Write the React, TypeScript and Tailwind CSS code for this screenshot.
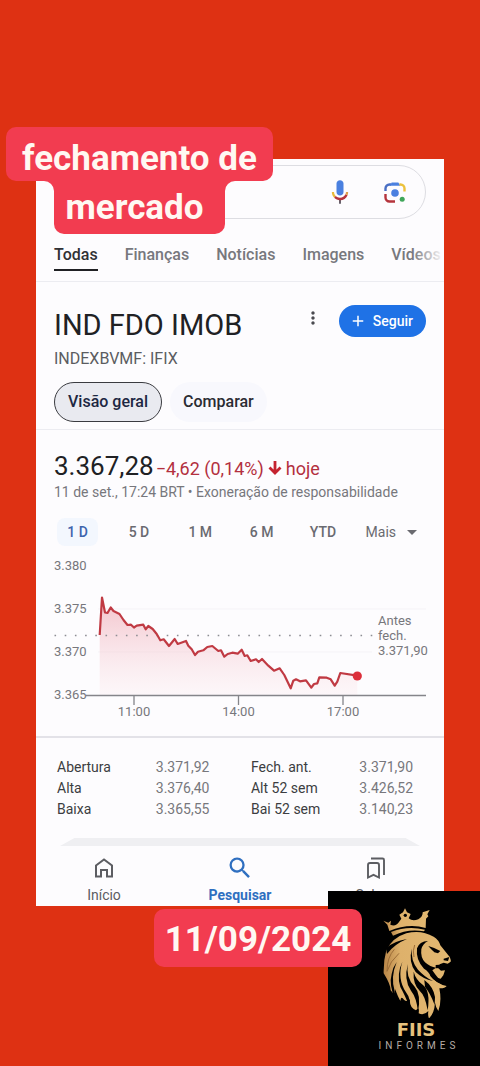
import { MdAdd, MdArrowDropDown, MdMoreVert, MdSearch } from "react-icons/md";

const LINE =
  "99.7,635 102,597.5 105,612.5 107.5,613 110.7,607.5 113.5,611 119.5,614 123.5,620 127.5,625 131,624.7 134,627.5 136.7,625.7 143.3,624.7 145.7,629.3 148.3,626 152.7,629 156.7,634 160.3,640.3 163.7,639.3 169,646 174.7,639 177.7,644 186,641 188.3,645.7 191.7,649.3 195,655 198,651.7 203.3,650.3 207.3,647 212.3,646 218.3,651 221,650.3 224.3,656.7 227.7,654 232.3,652.7 237.7,653.7 241.7,649.7 244.7,656 247.3,655.3 250.7,661 256,659.3 258.7,662 262,659 268.3,665.7 274,670.7 279.7,668.3 284.3,675 290.7,688.3 293.3,680.7 296,679.3 300,681.3 306,680.3 311.3,687.7 314,684 317.3,683.3 319.3,677.3 326.7,677.7 330.7,679.3 334.7,685.7 337.3,681.7 340.3,673 357.3,675.7";

const TABS = ["Todas", "Finanças", "Notícias", "Imagens", "Vídeos"];
const PERIODS = ["1 D", "5 D", "1 M", "6 M", "YTD"];
const STATS = [
  ["Abertura", "3.371,92", "Fech. ant.", "3.371,90"],
  ["Alta", "3.376,40", "Alt 52 sem", "3.426,52"],
  ["Baixa", "3.365,55", "Bai 52 sem", "3.140,23"],
];

function MicIcon() {
  return (
    <svg viewBox="0 0 24 24" className="size-7" aria-hidden="true">
      <path fill="#4a80e0" d="M12 15c1.7 0 3-1.3 3-3V4.900c0-1.700-1.300-3-3-3s-3 1.300-3 3V12c0 1.700 1.300 3 3 3z" />
      <path fill="#5d5560" d="M11.200 18h1.600v4h-1.600z" />
      <path fill="#e9b93a" d="M7 16.900C5.800 15.600 5 14 5 12h1.900c0 1.500.600 2.500 1.500 3.400z" />
      <path fill="#b5343c" d="M12 16.900c-1.400 0-2.700-.6-3.600-1.500L7 16.900c1.300 1.300 3 2.100 5 2.100 3 0 5.500-1.700 6.500-4.300l-1.900-.700c-.8 1.800-2.500 2.900-4.600 2.900z" />
      <path fill="#e0a04a" d="M18.500 14.700c.300-.8.500-1.700.5-2.700h-1.900c0 .7-.2 1.400-.5 2z" />
    </svg>
  );
}

function LensIcon() {
  return (
    <svg viewBox="0 0 24 24" className="size-6" fill="none" strokeWidth="2.400" aria-hidden="true">
      <path d="M2.500 11V8.500a4 4 0 0 1 4-4H8" stroke="#4a6fc4" />
      <path d="M6.500 5.700L8.700 2.400h6.600l2.200 3.300z" fill="#4a80e0" />
      <path d="M16.500 4.500h1a4 4 0 0 1 4 4v3" stroke="#ecc23c" />
      <path d="M2.500 14v3.500a4 4 0 0 0 4 4H12" stroke="#b5343c" />
      <circle cx="12" cy="13" r="3.800" fill="#4a80e0" />
      <circle cx="19.200" cy="19.200" r="2.500" fill="#3fa65a" />
    </svg>
  );
}

function PriceChart() {
  return (
    <svg
      viewBox="36 550 408 186"
      className="block w-full font-['Roboto',sans-serif] text-[13px]"
      fill="#77777c"
      role="img"
      aria-label="Gráfico de 1 dia"
    >
      <defs>
        <linearGradient id="area" x1="0" y1="597" x2="0" y2="695" gradientUnits="userSpaceOnUse">
          <stop offset="0" stopColor="#ec9aa6" stopOpacity=".6" />
          <stop offset="1" stopColor="#fbe6ea" stopOpacity=".25" />
        </linearGradient>
      </defs>
      <path d="M98 609H426M98 652H372" stroke="#f5f3f7" />
      <polygon points={"99.7,695 " + LINE + " 357.3,695"} fill="url(#area)" />
      <path d="M54.500 635.500H376" stroke="#8d8d93" strokeWidth="1.600" strokeDasharray="1.600 8.600" />
      <path d="M86 695.500H426M134 695.500V705M238.500 695.500V705M343 695.500V705" stroke="#85858a" strokeWidth="1.300" />
      <polyline points={LINE} fill="none" stroke="#c03a43" strokeWidth="2.200" strokeLinejoin="round" />
      <circle cx="357.300" cy="676" r="4.600" fill="#dc2f3a" />
      <text x="54" y="570">3.380</text>
      <text x="54" y="613">3.375</text>
      <text x="54" y="656">3.370</text>
      <text x="54" y="699">3.365</text>
      <g textAnchor="middle">
        <text x="134" y="716">11:00</text>
        <text x="238.500" y="716">14:00</text>
        <text x="343" y="716">17:00</text>
      </g>
      <text x="378" y="625">Antes</text>
      <text x="378" y="640">fech.</text>
      <text x="378" y="655">3.371,90</text>
    </svg>
  );
}

function HomeIcon() {
  return (
    <svg viewBox="0 0 24 24" className="size-6" fill="none" stroke="#5c5d62" strokeWidth="2" aria-hidden="true">
      <path d="M4 9.500L12 3.500l8 6v11h-5v-6.500h-6v6.500H4z" />
    </svg>
  );
}

function SavedIcon() {
  return (
    <svg viewBox="0 0 24 24" className="size-6" fill="none" stroke="#5c5d62" strokeWidth="1.900" aria-hidden="true">
      <path d="M4 21.500V9q0-2 2-2h7q2 0 2 2v12.500l-5.500-2.600z" />
      <path d="M7 2.500h11.500q1.500 0 1.500 1.500v15" />
    </svg>
  );
}

function LionLogo() {
  return (
    <svg viewBox="180 60 222 351" className="h-[117px] w-[74px]" aria-hidden="true">
      <defs>
        <linearGradient id="gold" x1="0" y1="0" x2="1" y2="0">
          <stop offset="0" stopColor="#b88648" />
          <stop offset=".25" stopColor="#deb16b" />
          <stop offset="1" stopColor="#e2b871" />
        </linearGradient>
      </defs>
      <g fill="url(#gold)">
        <path d="M193 107L208 113 216 107 214 119Q230 126 240 111L247 101 241 89 252 82 258 70 264 82 275 87 269 100Q280 110 298 103 312 95 311 82L332 75 325 88 328 94 321 101 320 129Q268 114 211 138L205 119Z" />
        <path d="M216 141Q265 121 318 134L315 139Q267 130 222 152Z" />
        <path d="M202 196Q220 158 262 145 306 133 344 155 360 165 364 181L388 211Q397 218 395 230L386 236 374 233 362 238 358 250 366 257 378 256 373 271 365 281 354 278 337 262 334 272Q352 296 383 303 377 311 361 310 369 349 358 378 350 366 348 353 346 385 330 400 326 392 328 378 315 393 299 385 302 362 291 376 270 366 273 343 263 352 255 344 246 330 244 348 236 333 228 312 229 336 215 316 215 299 194 265 193 228 202 196Z" />
      </g>
      <g fill="#000">
        <path d="M201 190Q222 169 264 162 226 177 204 207Z" />
        <path d="M294 190Q301 169 327 168 311 176 307 193 304 217 318 232 334 246 351 248L340 256Q348 268 358 280 373 294 382 301 350 294 335 274 330 260 315 251 290 226 294 190Z" />
        <path d="M279 191Q274 225 297 254 318 277 342 288 312 282 290 261 267 229 279 191Z" />
        <path d="M233 231Q214 277 227 318L229 346Q209 298 218 267 222 246 233 231Z" />
        <path d="M250 230Q234 281 261 322 276 342 270 362 256 327 244 306 232 268 250 230Z" />
        <path d="M267 237Q259 277 287 305 307 327 297 381 293 338 276 317 253 284 267 237Z" />
        <path d="M284 260Q290 284 312 300 335 318 326 376 318 331 303 319 281 297 284 260Z" />
        <path d="M316 285Q343 305 348 336L347 360Q333 323 318 306Z" />
        <path d="M328 183Q346 188 364 198L357 205 346 202Q337 194 328 183Z" />
        <path d="M374 221L391 216 387 228 374 226ZM350 240Q369 237 378 244L367 249 350 250Z" />
        <circle cx="259" cy="91" r="5" />
      </g>
      <path d="M226 193Q204 217 204 259 213 229 240 205M287 180Q280 197 285 216" fill="none" stroke="#9c6d38" strokeWidth="3" />
    </svg>
  );
}

export default function App() {
  return (
    <div className="relative min-h-screen overflow-hidden bg-[#de3113] px-9 pt-[159px] pb-40 font-['Roboto',sans-serif] text-[#202124]">
      <main className="bg-[#fdfcfe]">
        <div className="px-[18px] pt-1.5">
          <div className="flex h-[54px] items-center justify-end gap-[29px] rounded-full border border-[#dddde2] pr-[18px]">
            <button type="button" aria-label="Pesquisa por voz">
              <MicIcon />
            </button>
            <button type="button" aria-label="Pesquisa por imagem">
              <LensIcon />
            </button>
          </div>
        </div>

        <nav className="relative flex gap-[27px] overflow-hidden border-b border-[#ececf1] pt-[21px] pb-2.5 pl-[18px] text-base leading-7 font-medium text-[#77787d]">
          {TABS.map((tab, i) => (
            <a
              key={tab}
              href="#"
              className={i === 0 ? "border-b-2 border-[#202124] pt-px text-[#303135]" : "border-b-2 border-transparent pt-px"}
            >
              {tab}
            </a>
          ))}
          <span className="absolute inset-y-0 right-0 w-8 bg-linear-to-r from-transparent to-[#fdfcfe]" />
        </nav>

        <header className="border-b border-[#ececf1] px-[18px] pt-[23px] pb-[7px]">
          <div className="flex items-start">
            <h1 className="mt-1 flex-1 text-[29px] leading-8">IND FDO IMOB</h1>
            <button type="button" aria-label="Mais opções" className="mt-[3px] mr-4 text-[#4a4a4f]">
              <MdMoreVert className="size-5" />
            </button>
            <button
              type="button"
              className="flex h-8 items-center gap-1.5 rounded-full bg-[#1f72e6] pr-[13px] pl-2.5 text-sm font-medium text-white"
            >
              <MdAdd className="size-[18px]" />
              Seguir
            </button>
          </div>
          <p className="mt-2 text-base leading-5 text-[#5b5c61]">INDEXBVMF: IFIX</p>
          <div className="mt-[13px] flex gap-2 text-base font-medium text-[#2b2c33]">
            <button type="button" className="h-10 rounded-full border border-[#3a3b40] bg-[#e9eaf0] px-[13px] text-[#1d2742]">
              Visão geral
            </button>
            <button type="button" className="h-10 rounded-full bg-[#f8f8fd] px-[13px]">
              Comparar
            </button>
          </div>
        </header>

        <section className="border-b-2 border-[#e3e2e8] pt-5">
          <div className="flex h-8 items-baseline gap-0.5 px-[18px] leading-8">
            <span className="text-[26px]">3.367,28</span>
            <span className="flex items-baseline gap-1 text-lg leading-8 text-[#b3303f]">
              −4,62 (0,14%)
              <svg viewBox="0 0 14 14" className="size-3.5" fill="none" stroke="#c4222f" strokeWidth="2.800" aria-hidden="true">
                <path d="M7 0v12M1.500 6.500L7 12l5.500-5.500" />
              </svg>
              hoje
            </span>
          </div>
          <p className="px-[18px] text-sm leading-5 whitespace-nowrap text-[#77777c]">
            11 de set., 17:24 BRT • Exoneração de responsabilidade
          </p>
          <div className="mt-3.5 mb-0.5 flex h-8 items-center pr-5 pl-[11px] text-sm font-medium text-[#6a6a70]">
            {PERIODS.map((p, i) => (
              <button key={p} type="button" className="flex-1">
                <span className={i === 0 ? "rounded-lg bg-[#f3f7fe] px-2.5 py-1.5 text-[#3e64ad]" : ""}>{p}</span>
              </button>
            ))}
            <button type="button" className="flex items-center gap-1 pl-3 font-normal">
              Mais
              <MdArrowDropDown className="size-6" />
            </button>
          </div>
          <PriceChart />
        </section>

        <section className="px-[21px] pt-[18px] pb-[19px]">
          <table className="w-full table-fixed text-left text-sm">
            <tbody>
              {STATS.map(([a, b, c, d]) => (
                <tr key={a} className="h-[21px] leading-5 whitespace-nowrap">
                  <th scope="row" className="w-[27%] p-0 font-normal text-[#3c3d41]">{a}</th>
                  <td className="w-[26%] p-0 text-[#77777c]">{b}</td>
                  <th scope="row" className="w-[27%] p-0 font-normal text-[#3c3d41]">{c}</th>
                  <td className="p-0 text-right text-[#77777c]"><span className="mr-2.5">{d}</span></td>
                </tr>
              ))}
            </tbody>
          </table>
        </section>

        <div className="mx-6 h-2 bg-[#efeff2] [clip-path:polygon(4%_0,96%_0,100%_100%,0_100%)]" />

        <nav className="grid h-[60px] grid-cols-3 text-sm leading-5 text-[#5c5d62]">
          <a href="#" className="flex flex-col items-center pt-2.5">
            <HomeIcon />
            <span className="mt-[5px]">Início</span>
          </a>
          <a href="#" className="flex flex-col items-center pt-2 font-bold text-[#2f6fc0]">
            <MdSearch className="size-7" />
            <span className="mt-[3px]">Pesquisar</span>
          </a>
          <a href="#" className="flex flex-col items-center pt-2.5">
            <SavedIcon />
            <span className="mt-[5px]">Salvos</span>
          </a>
        </nav>
      </main>

      <aside className="absolute right-0 bottom-0 flex h-[175px] w-[152px] flex-col items-center bg-black pt-3.5 pl-6">
        <LionLogo />
        <p className="font-['DejaVu_Sans',sans-serif] text-lg leading-4 font-bold text-[#e6c27e]">FIIS</p>
        <p className="pt-0.5 pl-1.5 text-[10px] leading-3 tracking-[4px] text-[#b5aca6]">INFORMES</p>
      </aside>

      <div className="absolute top-[127px] left-1.5 flex w-[267px] flex-col items-center text-[35px] font-bold text-[#fff8f2]">
        <span className="w-full rounded-[10px] bg-[#f23c50] pt-2.5 text-center leading-11">fechamento de</span>
        <span className="relative w-[171px] rounded-b-[10px] bg-[#f23c50] pt-1 pr-2.5 pb-1 text-center leading-[45px]">
          mercado
          <svg viewBox="0 0 10 10" className="absolute top-0 right-full size-2.5" fill="#f23c50" aria-hidden="true">
            <path d="M0 0h10v10A10 10 0 0 0 0 0z" />
          </svg>
          <svg viewBox="0 0 10 10" className="absolute top-0 left-full size-2.5" fill="#f23c50" aria-hidden="true">
            <path d="M10 0H0v10A10 10 0 0 1 10 0z" />
          </svg>
        </span>
      </div>

      <p className="absolute bottom-[99px] left-[154px] w-52 rounded-[10px] bg-[#f23c50] pt-1 text-center text-[35px] leading-[54px] font-bold text-[#fff8f2]">
        11/09/2024
      </p>
    </div>
  );
}
